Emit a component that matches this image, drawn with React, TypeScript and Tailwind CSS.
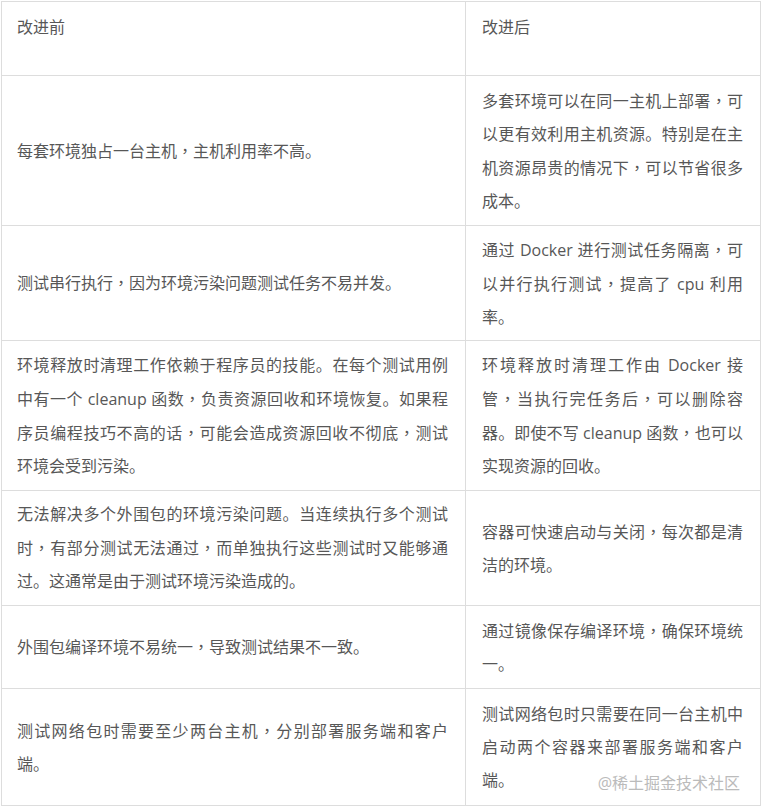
import { Fragment } from "react";

const rows: { h: string; left: string; right: string }[] = [
    {
        h: "h-[150px]",
        left: "每套环境独占一台主机，主机利用率不高。",
        right: "多套环境可以在同一主机上部署，可以更有效利用主机资源。特别是在主机资源昂贵的情况下，可以节省很多成本。",
    },
    {
        h: "h-[115px]",
        left: "测试串行执行，因为环境污染问题测试任务不易并发。",
        right: "通过 Docker 进行测试任务隔离，可以并行执行测试，提高了 cpu 利用率。",
    },
    {
        h: "h-[150px]",
        left: "环境释放时清理工作依赖于程序员的技能。在每个测试用例中有一个 cleanup 函数，负责资源回收和环境恢复。如果程序员编程技巧不高的话，可能会造成资源回收不彻底，测试环境会受到污染。",
        right: "环境释放时清理工作由 Docker 接管，当执行完任务后，可以删除容器。即使不写 cleanup 函数，也可以实现资源的回收。",
    },
    {
        h: "h-[115px]",
        left: "无法解决多个外围包的环境污染问题。当连续执行多个测试时，有部分测试无法通过，而单独执行这些测试时又能够通过。这通常是由于测试环境污染造成的。",
        right: "容器可快速启动与关闭，每次都是清洁的环境。",
    },
    {
        h: "h-[83px]",
        left: "外围包编译环境不易统一，导致测试结果不一致。",
        right: "通过镜像保存编译环境，确保环境统一。",
    },
    {
        h: "h-[116px]",
        left: "测试网络包时需要至少两台主机，分别部署服务端和客户端。",
        right: "测试网络包时只需要在同一台主机中启动两个容器来部署服务端和客户端。",
    },
];

// commas sit centred in the reference font, TC does the same
function Text({ s }: { s: string }) {
    const parts = s.split("，");
    return (
        <>
            {parts.map((p, i) => (
                <Fragment key={i}>
                    {p}
                    {i < parts.length - 1 && <span className="font-['Noto_Sans_CJK_TC',sans-serif]">，</span>}
                </Fragment>
            ))}
        </>
    );
}

export default function App() {
    return (
        <div className="w-[761px] h-[806px] bg-white pl-px pt-px font-['Open_Sans','Noto_Sans_CJK_SC',sans-serif] text-[16px] leading-[33px] text-[#575757]">
            <div className="relative w-[760px] border border-[#ddd]">
                <div className="flex h-[74px] border-b border-[#ddd]">
                    <div className="w-[464px] border-r border-[#ddd] pl-[15px] pt-[9px]">改进前</div>
                    <div className="flex-1 pl-[16px] pt-[9px]">改进后</div>
                </div>
                {rows.map((r, i) => (
                    <div
                        key={i}
                        className={`flex ${r.h} ${i < rows.length - 1 ? "border-b border-[#ddd]" : ""}`}
                    >
                        <div className="w-[464px] border-r border-[#ddd] pl-[15px] pr-[17px] flex items-center">
                            <p className="text-justify w-full">
                                <Text s={r.left} />
                            </p>
                        </div>
                        <div className="flex-1 pl-[16px] pr-[17px] flex items-center">
                            <p className="text-justify w-full">
                                <Text s={r.right} />
                            </p>
                        </div>
                    </div>
                ))}
                <div className="absolute right-[20px] bottom-[12px] text-[16px] leading-[20px] text-[#bbb]">
                    @稀土掘金技术社区
                </div>
            </div>
        </div>
    );
}
